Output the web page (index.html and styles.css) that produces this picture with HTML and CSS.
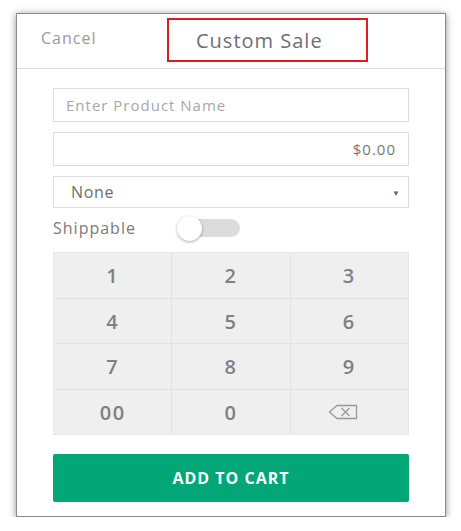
FILE: index.html
```html
<!DOCTYPE html>
<html>
<head>
<meta charset="utf-8">
<link rel="stylesheet" href="styles.css">
</head>
<body>
<div class="card">
  <div class="header">
    <div class="cancel">Cancel</div>
    <div class="title-box"><span class="title">Custom Sale</span></div>
  </div>
  <div class="content">
    <div class="field"><span class="placeholder">Enter Product Name</span></div>
    <div class="field price"><span class="value">$0.00</span></div>
    <div class="field select"><span class="value none">None</span><span class="arrow">▼</span></div>
    <div class="ship-row">
      <span class="ship-label">Shippable</span>
      <span class="toggle"><span class="knob"></span></span>
    </div>
    <div class="keypad">
      <div class="key">1</div><div class="key">2</div><div class="key">3</div>
      <div class="key">4</div><div class="key">5</div><div class="key">6</div>
      <div class="key">7</div><div class="key">8</div><div class="key">9</div>
      <div class="key">00</div><div class="key">0</div>
      <div class="key"><svg class="bksp" width="30" height="16" viewBox="0 0 30 16"><path d="M9 1.5 H28.5 V14.5 H9 L1.5 8 Z" fill="none" stroke="#999" stroke-width="1.3" stroke-linejoin="miter"/><path d="M13.5 4 L21.5 12 M21.5 4 L13.5 12" stroke="#999" stroke-width="1.3"/></svg></div>
    </div>
    <div class="add-btn">ADD TO CART</div>
  </div>
</div>
</body>
</html>
```

FILE: styles.css
```css
html, body {
  margin: 0;
  padding: 0;
  background: #ffffff;
}
body {
  font-family: "Open Sans", "Liberation Sans", sans-serif;
  padding-top: 13px;
  padding-left: 16px;
}
.card {
  width: 428px;
  height: 502px;
  background: #ffffff;
  border: 1px solid #8a8a8a;
  box-shadow: 0 1px 7px rgba(0, 0, 0, 0.45);
  display: flex;
  flex-direction: column;
}
.header {
  height: 54px;
  border-bottom: 1px solid #dcdcdc;
  display: flex;
  align-items: flex-start;
  padding-left: 24px;
}
.cancel {
  width: 126px;
  font-size: 16px;
  letter-spacing: 1px;
  color: #9a9a9a;
  margin-top: 13px;
}
.title-box {
  box-sizing: border-box;
  width: 201px;
  height: 44px;
  margin-top: 4px;
  border: 2.5px solid #e01b1b;
  padding-left: 27px;
  display: flex;
  align-items: center;
}
.title {
  font-size: 20px;
  letter-spacing: 1px;
  color: #6b6f73;
  margin-top: 1px;
}
.content {
  padding: 19px 36px 0 36px;
  display: flex;
  flex-direction: column;
}
.field {
  box-sizing: border-box;
  height: 34px;
  border: 1px solid #dddddd;
  display: flex;
  align-items: center;
  padding: 0 12px;
  font-size: 15px;
  letter-spacing: 1px;
  margin-bottom: 10px;
}
.placeholder {
  color: #a7a7a7;
}
.price {
  justify-content: flex-end;
}
.value {
  color: #777777;
}
.select {
  height: 32px;
  justify-content: space-between;
  padding-left: 17px;
  padding-right: 7px;
  margin-bottom: 0;
}
.none {
  font-size: 16px;
  letter-spacing: 0.7px;
  color: #6e6e6e;
}
.arrow {
  font-size: 8px;
  color: #666;
}
.ship-row {
  display: flex;
  align-items: center;
  height: 22px;
  margin-top: 9px;
}
.ship-label {
  font-size: 16px;
  letter-spacing: 1px;
  color: #7a7a7a;
  width: 124px;
}
.toggle {
  position: relative;
  width: 50px;
  height: 18px;
  border-radius: 9px;
  background: #dcdcdc;
  margin-left: 13px;
}
.knob {
  position: absolute;
  left: -13px;
  top: -3px;
  width: 25px;
  height: 25px;
  border-radius: 50%;
  background: #ffffff;
  box-shadow: 0 1px 3px rgba(0, 0, 0, 0.35);
}
.keypad {
  margin-top: 13px;
  display: grid;
  grid-template-columns: 1fr 1fr 1fr;
  grid-template-rows: 45px 44px 45px 44px;
  gap: 1px;
  background: #e2e2e2;
  border: 1px solid #e6e6e6;
}
.key {
  background: #efefef;
  display: flex;
  align-items: center;
  justify-content: center;
  font-size: 20px;
  letter-spacing: 1.5px;
  font-weight: 600;
  color: #808080;
}
.bksp {
  margin-right: 12px;
}
.add-btn {
  margin-top: 19px;
  height: 48px;
  border-radius: 2px;
  background: #02a677;
  color: #ffffff;
  font-weight: 700;
  font-size: 16px;
  letter-spacing: 1px;
  display: flex;
  align-items: center;
  justify-content: center;
}
```
